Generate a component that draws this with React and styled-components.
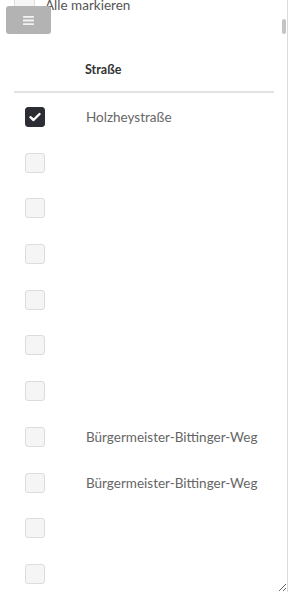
import React from "react";
import styled, { createGlobalStyle } from "styled-components";

const Global = createGlobalStyle`
  html, body { margin: 0; padding: 0; background: #fff; }
  body { font-family: Lato, "Open Sans", "Liberation Sans", sans-serif; }
  * { box-sizing: border-box; }
`;

const Frame = styled.div`
  position: relative;
  width: 288px;
  height: 592px;
  border-right: 1px solid #dadada;
  overflow: hidden;
  resize: both;
  background: #fff;
`;

const Content = styled.div`
  padding: 0 13px 0 14px;
  margin-top: -6px;
`;

const SelectAll = styled.label`
  display: flex;
  align-items: center;
  gap: 10px;
  height: 21px;
  font-size: 13.5px;
  color: #555;
`;

const Box = styled.span`
  display: inline-flex;
  align-items: center;
  justify-content: center;
  flex: none;
  width: ${(p) => p.$size || 20}px;
  height: ${(p) => p.$size || 20}px;
  border-radius: 3px;
  background: ${(p) => (p.$checked ? "#2c2c34" : "#f5f5f5")};
  border: 1px solid ${(p) => (p.$checked ? "#2c2c34" : "#dcdcdc")};
`;

const Table = styled.div`
  margin-top: 32px;
`;

const HeaderRow = styled.div`
  display: grid;
  grid-template-columns: 71px 1fr;
  align-items: center;
  height: 46px;
  border-bottom: 2px solid #e2e2e2;
  font-size: 12.5px;
  font-weight: 700;
  color: #333;
`;

const Body = styled.div`
  padding-top: 1.2px;
`;

const Row = styled.div`
  display: grid;
  grid-template-columns: 71px 1fr;
  align-items: center;
  height: 45.7px;
  font-size: 13.5px;
  color: #666;
`;

const BoxCell = styled.div`
  padding-left: 11px;
  display: flex;
  align-items: center;
`;

const NameCell = styled.div`
  padding-left: 1px;
  white-space: nowrap;
`;

const MenuButton = styled.button`
  position: absolute;
  left: 6px;
  top: 6px;
  width: 45px;
  height: 28px;
  border: none;
  border-radius: 3px;
  background: #b3b3b3;
  display: flex;
  align-items: center;
  justify-content: center;
  padding: 0;
`;

const Thumb = styled.div`
  position: absolute;
  right: 1px;
  top: 19px;
  width: 4px;
  height: 15px;
  border-radius: 2px;
  background: #c4c4c4;
`;

const Check = () => (
  <svg width="12" height="10" viewBox="0 0 12 10">
    <path d="M1.5 5.2 L4.5 8 L10.5 2" fill="none" stroke="#fff" strokeWidth="2.4" strokeLinecap="round" strokeLinejoin="round" />
  </svg>
);

const Bars = () => (
  <svg width="11" height="9" viewBox="0 0 11 9">
    <rect x="0" y="0" width="11" height="1.8" rx="0.5" fill="#f2f2f2" />
    <rect x="0" y="3.6" width="11" height="1.8" rx="0.5" fill="#f2f2f2" />
    <rect x="0" y="7.2" width="11" height="1.8" rx="0.5" fill="#f2f2f2" />
  </svg>
);

const rows = [
  { name: "Holzheystraße", checked: true },
  { name: "" },
  { name: "" },
  { name: "" },
  { name: "" },
  { name: "" },
  { name: "" },
  { name: "Bürgermeister-Bittinger-Weg" },
  { name: "Bürgermeister-Bittinger-Weg" },
  { name: "" },
  { name: "" },
  { name: "" },
];

export default function App() {
  return (
    <>
      <Global />
      <Frame>
        <Content>
          <SelectAll>
            <Box $size={21} />
            Alle markieren
          </SelectAll>
          <Table>
            <HeaderRow>
              <span />
              <span>Straße</span>
            </HeaderRow>
            <Body>
              {rows.map((r, i) => (
                <Row key={i}>
                  <BoxCell>
                    <Box $checked={r.checked}>{r.checked && <Check />}</Box>
                  </BoxCell>
                  <NameCell>{r.name}</NameCell>
                </Row>
              ))}
            </Body>
          </Table>
        </Content>
        <Thumb />
        <MenuButton aria-label="Menü">
          <Bars />
        </MenuButton>
      </Frame>
    </>
  );
}
